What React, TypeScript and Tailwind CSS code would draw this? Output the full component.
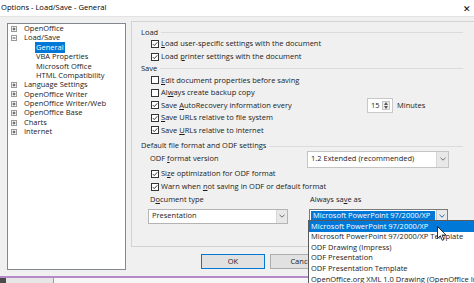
import React from 'react';

type TreeItem = { label: string; level: number; exp?: '+' | '-'; sel?: boolean };

const TREE: TreeItem[] = [
  { label: 'OpenOffice', level: 0, exp: '+' },
  { label: 'Load/Save', level: 0, exp: '-' },
  { label: 'General', level: 1, sel: true },
  { label: 'VBA Properties', level: 1 },
  { label: 'Microsoft Office', level: 1 },
  { label: 'HTML Compatibility', level: 1 },
  { label: 'Language Settings', level: 0, exp: '+' },
  { label: 'OpenOffice Writer', level: 0, exp: '+' },
  { label: 'OpenOffice Writer/Web', level: 0, exp: '+' },
  { label: 'OpenOffice Base', level: 0, exp: '+' },
  { label: 'Charts', level: 0, exp: '+' },
  { label: 'Internet', level: 0, exp: '+' },
];

const LIST = [
  'Microsoft PowerPoint 97/2000/XP',
  'Microsoft PowerPoint 97/2000/XP Template',
  'ODF Drawing (Impress)',
  'ODF Presentation',
  'ODF Presentation Template',
  'OpenOffice.org XML 1.0 Drawing (OpenOffice Impress)',
];

const Expander = ({ open }: { open: boolean }) => (
  <svg width="6" height="6" viewBox="0 0 6 6" className="shrink-0">
    <rect x="0.5" y="0.5" width="5" height="5" fill="#fff" stroke="#9a9a9a" />
    <path d="M1.5 3H4.5" stroke="#444" />
    {!open && <path d="M3 1.5V4.5" stroke="#444" />}
  </svg>
);

const Check = ({ on }: { on: boolean }) => (
  <svg width="8" height="8" viewBox="0 0 8 8" className="shrink-0">
    <rect x="0.5" y="0.5" width="7" height="7" fill="#fff" stroke="#333" />
    {on && <path d="M1.8 4.1L3.3 5.6L6.3 2.3" fill="none" stroke="#222" strokeWidth="0.9" />}
  </svg>
);

const Chevron = ({ color = '#606060' }: { color?: string }) => (
  <svg width="6" height="4" viewBox="0 0 6 4">
    <path d="M0.5 0.8L3 3.2L5.5 0.8" fill="none" stroke={color} strokeWidth="0.9" />
  </svg>
);

const U = ({ children }: { children: React.ReactNode }) => <span className="underline underline-offset-1">{children}</span>;

const Header = ({ children, h }: { children: React.ReactNode; h: string }) => (
  <div className={`flex items-center ${h}`}>
    <span>{children}</span>
    <div className="ml-[3px] h-px flex-1 bg-[#dcdcdc]" />
  </div>
);

const CheckRow = ({ on, children, h = 'h-[12.5px]' }: { on: boolean; children: React.ReactNode; h?: string }) => (
  <div className={`flex items-center gap-[2px] pl-[10px] ${h}`}>
    <Check on={on} />
    <span className="whitespace-nowrap">{children}</span>
  </div>
);

const Combo = ({ text, w }: { text: string; w: string }) => (
  <div className={`flex h-[15px] items-stretch border border-[#b4b4b4] bg-white ${w}`}>
    <div className="flex flex-1 items-center pl-[3px]">{text}</div>
    <div className="flex w-[11px] items-center justify-center border-l border-[#d6d6d6] bg-[#e8e8e8]">
      <Chevron />
    </div>
  </div>
);

export default function App() {
  return (
    <div className="relative h-[283px] w-[474px] overflow-hidden bg-[#f0f0f0] font-['Open_Sans',sans-serif] text-[7.5px] leading-none text-[#1b1b1b]">
      {/* title bar */}
      <div className="flex h-[17px] items-center justify-between border-b border-[#e3e3e3] bg-white pl-[1px] pr-[3px] text-[7.6px] text-black">
        <span>Options - Load/Save - General</span>
        <span className="text-[9px] font-light">✕</span>
      </div>

      <div className="flex h-[259px]">
        {/* tree */}
        <div className="ml-[7px] mt-[6px] h-[247px] w-[119px] shrink-0 border border-[#828790] bg-white">
          {TREE.map((t) => (
            <div key={t.label} className={`flex h-[9.4px] items-center ${t.level ? 'pl-[27px]' : 'pl-[3px]'}`}>
              {t.exp && <Expander open={t.exp === '-'} />}
              <span
                className={`whitespace-nowrap ${t.exp ? 'ml-[6px]' : ''} ${
                  t.sel ? 'bg-[#0078d7] px-[1px] py-[1.5px] text-white' : 'px-[1px]'
                }`}
              >
                {t.label}
              </span>
            </div>
          ))}
        </div>

        {/* right column */}
        <div className="ml-[5px] mt-[4px] flex shrink-0 flex-col">
          <div className="h-[226px] w-[360px] border border-[#d2d2d2]">
            <div className="w-[331px] pl-[9px] pt-[6px]">
              <Header h="h-[9px]">Load</Header>
              <CheckRow on h="h-[13px]">
                <U>L</U>oad user-specific settings with the document
              </CheckRow>
              <CheckRow on h="h-[13px]">
                Load <U>p</U>rinter settings with the document
              </CheckRow>
              <Header h="h-[11px]">Save</Header>
              <CheckRow on={false}>
                <U>E</U>dit document properties before saving
              </CheckRow>
              <CheckRow on={false}>
                Al<U>w</U>ays create backup copy
              </CheckRow>
              <div className="flex h-[12.5px] items-center pl-[10px]">
                <div className="flex w-[216px] shrink-0 items-center gap-[2px]">
                  <Check on />
                  <span>
                    Save <U>A</U>utoRecovery information every
                  </span>
                </div>
                <div className="flex h-[15px] w-[26px] items-stretch border border-[#c8c8c8] bg-white">
                  <div className="flex flex-1 items-center pl-[3px]">15</div>
                  <div className="my-[2px] mr-[2px] flex w-[8px] flex-col items-center justify-center gap-[1px] border border-[#c4c4c4] bg-[#ececec]">
                    <svg width="4" height="3" viewBox="0 0 4 3"><path d="M0 3L2 0L4 3Z" fill="#555" /></svg>
                    <svg width="4" height="3" viewBox="0 0 4 3"><path d="M0 0L2 3L4 0Z" fill="#555" /></svg>
                  </div>
                </div>
                <span className="ml-[4px]">Minutes</span>
              </div>
              <CheckRow on>
                <U>S</U>ave URLs relative to file system
              </CheckRow>
              <CheckRow on>
                Save <U>U</U>RLs relative to internet
              </CheckRow>

              <div className="mt-[5px]">
                <Header h="h-[9px]">Default file format and ODF settings</Header>
              </div>
              <div className="flex h-[17px] items-center pl-[9px]">
                <span className="w-[157px] shrink-0">
                  ODF <U>f</U>ormat version
                </span>
                <div className="flex h-[17px] w-[142px] items-stretch border border-[#c4c4c4] bg-white">
                  <div className="flex flex-1 items-center pl-[3px]">1.2 Extended (recommended)</div>
                  <div className="flex w-[12px] items-center justify-center border-l border-[#d6d6d6] bg-[#e8e8e8]">
                    <Chevron />
                  </div>
                </div>
              </div>
              <CheckRow on h="h-[12.5px]">
                Si<U>z</U>e optimization for ODF format
              </CheckRow>
              <CheckRow on h="h-[13px]">
                Warn when <U>n</U>ot saving in ODF or default format
              </CheckRow>
              <div className="flex h-[12.5px] items-center pl-[9px]">
                <span className="w-[160px] shrink-0">
                  D<U>o</U>cument type
                </span>
                <span>
                  Always sa<U>v</U>e as
                </span>
              </div>
              <div className="mt-[3px] flex items-center pl-[7px]">
                <Combo text="Presentation" w="w-[140px]" />
                <div className="ml-[21px] flex h-[14px] w-[139px] items-stretch border border-[#7a7a7a] bg-white">
                  <div className="m-[1px] flex flex-1 items-center bg-[#0078d7] pl-[2px] text-white">
                    Microsoft PowerPoint 97/2000/XP
                  </div>
                  <div className="flex w-[11px] items-center justify-center border-l border-[#c4c4c4] bg-[#e8e8e8]">
                    <Chevron color="#0b5aa8" />
                  </div>
                </div>
              </div>
            </div>
          </div>

          <div className="mt-[7px] flex h-[15px] gap-[5px] pl-[70px]">
            <div className="flex w-[64px] items-center justify-center border border-[#0078d7] bg-[#e1e1e1]">OK</div>
            <div className="flex w-[64px] items-center justify-center border border-[#adadad] bg-[#e1e1e1]">Cancel</div>
          </div>
        </div>
      </div>

      {/* bottom strip */}
      <div className="flex h-[7px] border-t-2 border-[#b68ac8]">
        <div className="w-[6px] bg-[#4a4a4a]" />
        <div className="w-[48px] border-r border-[#9a9a9a] bg-[#e6e6e6]" />
        <div className="flex-1 bg-[#f6f6f6]" />
      </div>

      {/* open dropdown list */}
      <div className="absolute left-[308px] top-[220px] w-[200px] border border-[#5a5a5a] bg-white">
        {LIST.map((item, i) => (
          <div
            key={item}
            className={`flex h-[10.6px] items-center whitespace-nowrap pl-[2px] ${i === 0 ? 'bg-[#0078d7] text-white' : ''}`}
          >
            {item}
          </div>
        ))}
      </div>

      {/* mouse pointer */}
      <svg className="absolute left-[437px] top-[226px]" width="10" height="16" viewBox="0 0 10 16">
        <path d="M0.5 0.5V12.5L3.3 9.8L5.2 14.3L7 13.5L5.1 9.1H9Z" fill="#fff" stroke="#000" strokeWidth="0.8" strokeLinejoin="round" />
      </svg>
    </div>
  );
}
